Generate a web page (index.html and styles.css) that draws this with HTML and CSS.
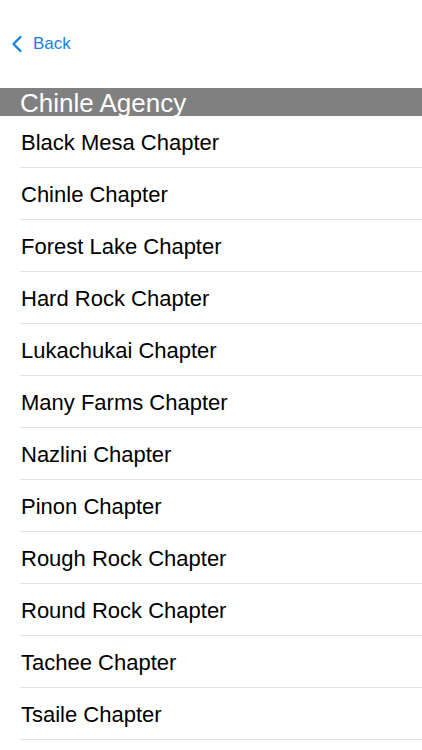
FILE: index.html
```html
<!DOCTYPE html>
<html lang="en">
<head>
  <meta charset="UTF-8" />
  <title>Chinle Agency</title>
  <link rel="stylesheet" href="styles.css">
</head>
<body>
  <div class="nav">
    <a class="back" href="#">
      <svg class="chevron" width="12" height="20" viewBox="0 0 12 20">
        <path d="M9.5 3 L2.5 10 L9.5 17" fill="none" stroke="currentColor" stroke-width="2.4" stroke-linecap="round" stroke-linejoin="round"/>
      </svg>
      <span>Back</span>
    </a>
  </div>

  <div class="section-header">Chinle Agency</div>
  <ul class="chapters">
    <li>Black Mesa Chapter</li>
    <li>Chinle Chapter</li>
    <li>Forest Lake Chapter</li>
    <li>Hard Rock Chapter</li>
    <li>Lukachukai Chapter</li>
    <li>Many Farms Chapter</li>
    <li>Nazlini Chapter</li>
    <li>Pinon Chapter</li>
    <li>Rough Rock Chapter</li>
    <li>Round Rock Chapter</li>
    <li>Tachee Chapter</li>
    <li>Tsaile Chapter</li>
  </ul>
</body>
</html>
```

FILE: styles.css
```css
body {
  margin: 0;
  font-family: "Liberation Sans", Arial, sans-serif;
  background: #fff;
  color: #000;
  overflow: hidden;
}
.nav {
  height: 88px;
  display: flex;
  align-items: flex-start;
}
.back {
  display: flex;
  align-items: center;
  gap: 10px;
  margin-top: 34px;
  margin-left: 11px;
  color: #1c80e4;
  text-decoration: none;
  font-size: 17px;
}
.chevron {
  display: block;
}
/* grey band over the list; descenders run past it onto the white */
.section-header {
  height: 28px;
  line-height: 30px;
  background: #808080;
  color: #fff;
  font-size: 26px;
  padding-left: 20px;
}
.chapters {
  list-style: none;
  margin: 0;
  padding: 0 0 0 20px;
}
.chapters li {
  height: 49px;
  padding: 2px 0 0 1px;
  line-height: 50px;
  font-size: 22px;
  border-bottom: 1px solid #e3e3e3;
}
```
